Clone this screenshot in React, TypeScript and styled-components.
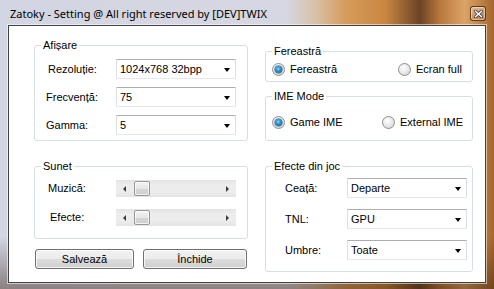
import React from 'react';
import styled, { createGlobalStyle } from 'styled-components';

const Colors = {
    text: '#000000',
    groupBorder: '#d5dfe5',
    comboTop: '#abadb3',
    comboSide: '#dbdfe6',
    comboBottom: '#e3e9ef',
    buttonBorder: '#707070',
    track: '#e8e8e8',
};

const GlobalStyle = createGlobalStyle`
    html, body {
        margin: 0;
        padding: 0;
    }
    body {
        width: 494px;
        height: 289px;
        overflow: hidden;
        font-family: 'Liberation Sans', Arial, sans-serif;
        font-size: 11px;
        color: ${Colors.text};
    }
`;

function App() {
    return (
        <>
            <GlobalStyle />
            <Frame>
                <TitleBar>
                    <Title>Zatoky - Setting @ All right reserved by [DEV]TWIX</Title>
                    <CloseButton>
                        <svg width="9" height="8" viewBox="0 0 9 8">
                            <path d="M1.5 1.2 L7.5 6.8 M7.5 1.2 L1.5 6.8" stroke="#3a3a48" strokeWidth="3" strokeLinecap="square" />
                            <path d="M1.5 1.2 L7.5 6.8 M7.5 1.2 L1.5 6.8" stroke="#ffffff" strokeWidth="1.4" strokeLinecap="square" />
                        </svg>
                    </CloseButton>
                </TitleBar>
                <Client>
                    <LeftColumn>
                        <GroupBox $h={96}>
                            <Caption>Afișare</Caption>
                            <FormGrid $top={13} $gap={8} $label={81}>
                                <Label $indent={13}>Rezoluție:</Label>
                                <Combo value="1024x768 32bpp" />
                                <Label $indent={11}>Frecvență:</Label>
                                <Combo value="75" />
                                <Label $indent={11}>Gamma:</Label>
                                <Combo value="5" />
                            </FormGrid>
                        </GroupBox>
                        <GroupBox $h={73} $mt={25}>
                            <Caption>Sunet</Caption>
                            <FormGrid $top={13} $gap={12} $label={81}>
                                <Label $indent={13}>Muzică:</Label>
                                <ScrollBar />
                                <Label $indent={15}>Efecte:</Label>
                                <ScrollBar />
                            </FormGrid>
                        </GroupBox>
                        <ButtonRow>
                            <PushButton $w={99}>Salvează</PushButton>
                            <PushButton $w={104}>Închide</PushButton>
                        </ButtonRow>
                    </LeftColumn>
                    <RightColumn>
                        <GroupBox $h={31}>
                            <Caption>Fereastră</Caption>
                            <RadioRow $top={11} $col={126}>
                                <RadioOption checked label="Fereastră" />
                                <RadioOption label="Ecran full" />
                            </RadioRow>
                        </GroupBox>
                        <GroupBox $h={45} $mt={14}>
                            <Caption>IME Mode</Caption>
                            <RadioRow $top={19} $col={110}>
                                <RadioOption checked label="Game IME" />
                                <RadioOption label="External IME" />
                            </RadioRow>
                        </GroupBox>
                        <GroupBox $h={106} $mt={25}>
                            <Caption>Efecte din joc</Caption>
                            <FormGrid $top={11} $gap={11} $label={81}>
                                <Label $indent={19}>Ceață:</Label>
                                <Combo value="Departe" />
                                <Label $indent={19}>TNL:</Label>
                                <Combo value="GPU" />
                                <Label $indent={19}>Umbre:</Label>
                                <Combo value="Toate" />
                            </FormGrid>
                        </GroupBox>
                    </RightColumn>
                </Client>
            </Frame>
        </>
    );
}

//#region Window frame
const Frame = styled.div`
    width: 494px;
    height: 289px;
    box-sizing: border-box;
    display: flex;
    flex-direction: column;
    padding: 0 8px 6px 8px;
    background:
        linear-gradient(to bottom, rgba(0, 0, 0, 0) 82%, rgba(50, 25, 10, 0.45) 100%),
        linear-gradient(
            to right,
            #d2d5e2 0%,
            #d6d7e1 58%,
            #d8c0a6 64%,
            #d79c5c 70%,
            #c98640 78%,
            #6b4426 85%,
            #b8773c 89%,
            #dca466 94%,
            #a4672f 100%
        );
`;

const TitleBar = styled.div`
    height: 25px;
    display: flex;
    justify-content: space-between;
    align-items: flex-start;
    padding-left: 2px;
`;

const Title = styled.div`
    font-family: 'Noto Sans', 'Open Sans', sans-serif;
    font-size: 11px;
    line-height: 16px;
    margin-top: 6px;
    color: #000;
    white-space: nowrap;
`;

const CloseButton = styled.div`
    width: 16px;
    height: 15px;
    box-sizing: border-box;
    margin-top: 6px;
    display: flex;
    align-items: center;
    justify-content: center;
    border: 1px solid rgba(70, 40, 20, 0.85);
    border-radius: 3px;
    background: linear-gradient(to bottom, rgba(255, 230, 200, 0.45), rgba(200, 130, 70, 0.35));
    box-shadow: inset 0 0 0 1px rgba(255, 255, 255, 0.45);
`;

const Client = styled.div`
    flex: 1;
    display: grid;
    grid-template-columns: 214px 208px;
    column-gap: 17px;
    align-items: start;
    padding: 19px 0 0 25px;
    background: #ffffff;
    border: 1px solid #404247;
    box-shadow: 0 0 0 1px rgba(255, 255, 255, 0.55);
`;
//#endregion

//#region Layout columns
const LeftColumn = styled.div`
    display: flex;
    flex-direction: column;
`;

const RightColumn = styled.div`
    display: flex;
    flex-direction: column;
    margin-top: 6px;
`;

const GroupBox = styled.div<{ $h: number; $mt?: number }>`
    position: relative;
    box-sizing: border-box;
    height: ${(p) => p.$h}px;
    margin-top: ${(p) => p.$mt ?? 0}px;
    border: 1px solid ${Colors.groupBorder};
    border-radius: 3px;
`;

const Caption = styled.span`
    position: absolute;
    top: -7px;
    left: 6px;
    padding: 0 2px;
    background: #ffffff;
    line-height: 13px;
`;

const FormGrid = styled.div<{ $top: number; $gap: number; $label: number }>`
    display: grid;
    grid-template-columns: ${(p) => p.$label}px 120px;
    row-gap: ${(p) => p.$gap}px;
    align-items: center;
    padding-top: ${(p) => p.$top}px;
`;

const Label = styled.div<{ $indent: number }>`
    padding-left: ${(p) => p.$indent}px;
    line-height: 13px;
`;

const ButtonRow = styled.div`
    display: flex;
    gap: 9px;
    margin-top: 10px;
    padding-left: 1px;
`;
//#endregion

//#region Controls
function Combo({ value }: { value: string }) {
    return (
        <ComboBox>
            <ComboText>{value}</ComboText>
            <ComboArrow />
        </ComboBox>
    );
}

const ComboBox = styled.div`
    box-sizing: border-box;
    height: 20px;
    display: flex;
    align-items: center;
    justify-content: space-between;
    padding: 0 5px 0 3px;
    background: #ffffff;
    border: 1px solid;
    border-color: ${Colors.comboTop} ${Colors.comboSide} ${Colors.comboBottom} ${Colors.comboSide};
    border-radius: 1px;
`;

const ComboText = styled.span`
    line-height: 13px;
`;

const ComboArrow = styled.span`
    width: 0;
    height: 0;
    border-left: 3.5px solid transparent;
    border-right: 3.5px solid transparent;
    border-top: 4px solid #000000;
    margin-top: 1px;
`;

function ScrollBar() {
    return (
        <Track>
            <ArrowCell>
                <ArrowLeft />
            </ArrowCell>
            <TrackBody>
                <Thumb />
            </TrackBody>
            <ArrowCell>
                <ArrowRight />
            </ArrowCell>
        </Track>
    );
}

const Track = styled.div`
    height: 17px;
    display: flex;
    background: linear-gradient(to bottom, #e3e3e3, #ededed 30%, #ececec 70%, #e4e4e4);
`;

const ArrowCell = styled.div`
    width: 17px;
    display: flex;
    align-items: center;
    justify-content: center;
`;

const ArrowLeft = styled.span`
    width: 0;
    height: 0;
    border-top: 3px solid transparent;
    border-bottom: 3px solid transparent;
    border-right: 3px solid #3c3c3c;
`;

const ArrowRight = styled(ArrowLeft)`
    border-right: none;
    border-left: 3px solid #3c3c3c;
`;

const TrackBody = styled.div`
    flex: 1;
    display: flex;
    align-items: center;
    padding-left: 1px;
`;

const Thumb = styled.div`
    box-sizing: border-box;
    width: 16px;
    height: 15px;
    border: 1px solid #979797;
    border-radius: 2px;
    background: linear-gradient(to bottom, #f4f4f4, #e6e6e6 50%, #d6d6d6 51%, #cfcfcf);
    box-shadow: inset 0 0 0 1px rgba(255, 255, 255, 0.7);
`;

function RadioOption({ label, checked }: { label: string; checked?: boolean }) {
    return (
        <RadioItem>
            <RadioCircle $checked={!!checked} />
            <span>{label}</span>
        </RadioItem>
    );
}

const RadioRow = styled.div<{ $top: number; $col: number }>`
    display: grid;
    grid-template-columns: ${(p) => p.$col}px auto;
    padding: ${(p) => p.$top}px 0 0 6px;
`;

const RadioItem = styled.div`
    display: flex;
    align-items: center;
    gap: 5px;
    line-height: 13px;
`;

const RadioCircle = styled.span<{ $checked: boolean }>`
    position: relative;
    box-sizing: border-box;
    width: 13px;
    height: 13px;
    border-radius: 50%;
    border: 1px solid #8e8f8f;
    background: radial-gradient(circle at 40% 35%, #ffffff 0%, #e6e6e6 55%, #cfcfcf 100%);

    &::after {
        content: '';
        display: ${(p) => (p.$checked ? 'block' : 'none')};
        position: absolute;
        left: 2px;
        top: 2px;
        width: 7px;
        height: 7px;
        border-radius: 50%;
        background: radial-gradient(circle at 45% 40%, #7fd6f7 0%, #2a8ac6 45%, #14507f 100%);
        box-shadow: 0 0 0 0.5px #1b4f78;
    }
`;

const PushButton = styled.div<{ $w: number }>`
    box-sizing: border-box;
    width: ${(p) => p.$w}px;
    height: 20px;
    display: flex;
    align-items: center;
    justify-content: center;
    border: 1px solid ${Colors.buttonBorder};
    border-radius: 3px;
    background: linear-gradient(to bottom, #f2f2f2 0%, #ebebeb 50%, #dddddd 51%, #cfcfcf 100%);
    box-shadow: inset 0 0 0 1px rgba(255, 255, 255, 0.75);
    line-height: 13px;
`;
//#endregion

export default App;
